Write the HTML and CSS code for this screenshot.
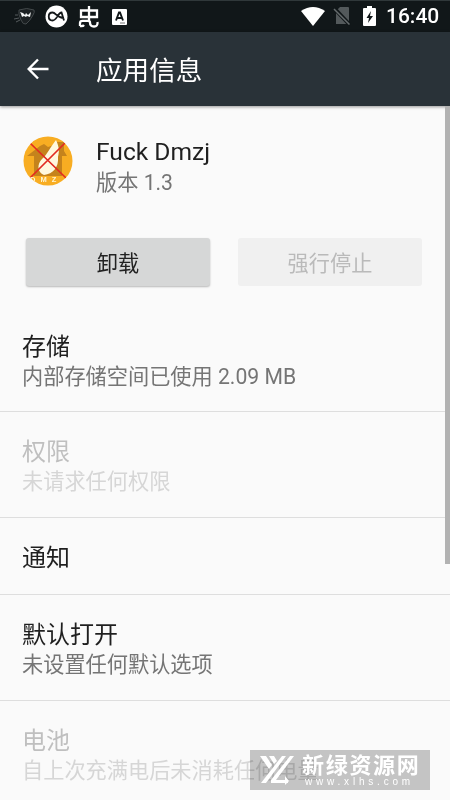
FILE: index.html
```html
<!DOCTYPE html>
<html lang="zh-CN">
<head>
<meta charset="utf-8">
<title>应用信息</title>
<link rel="stylesheet" href="styles.css">
</head>
<body>
<div class="screen">
  <header class="status">
    <div class="status-left">
      <svg width="22" height="20" viewBox="0 0 22 20"><path d="M5 3 Q13 0 20 3 Q21 5 19 8 Q16 14 12 17 Q9 18 7 13 Q4 7 5 3Z" fill="#1b2022" stroke="#43494b"/><path d="M6 5l3 1 2 2 1-2 2 2 3-3-1 5-3-1-1 1-2-1-2 1-1-3z" fill="#f1f3f3"/><path d="M1 8h3M0 12l5-1M2 15l4-2" stroke="#555b5d" stroke-width="1"/></svg>
      <svg class="oa" width="23" height="23" viewBox="0 0 23 23"><circle cx="11.500" cy="11.500" r="11" fill="#fff"/><path d="M19 15.500L16.500 7.500C13 7.500 12 15.500 7.500 15.500C2.500 15.500 2.500 7.500 7.500 7.500C11 7.500 12 13 19 13" fill="none" stroke="#15191b" stroke-width="1.800"/></svg>
      <svg class="bug" width="22" height="24" viewBox="0 0 22 24"><path d="M11 1v14.500M3 5.500h16v6.500H3zM2 21V18Q2 15.800 4.500 15.800H10Q12 15.800 12 17.500Q12 21.500 16 21.500Q20 21.500 19.500 17M2 21q3 .5 4-1" fill="none" stroke="#fff" stroke-width="2.300"/></svg>
      <svg class="a-box" width="15" height="16" viewBox="0 0 15 16"><rect width="15" height="16" rx="1" fill="#fff"/><path d="M4 11.500L7 3.500h1L11 11.500M5.200 9h4.600" fill="none" stroke="#111719" stroke-width="1.900"/><path d="M8 14h5" stroke="#777" /></svg>
    </div>
    <div class="status-right">
      <svg width="24" height="19" viewBox="0 0 24 19"><path d="M0 4Q12-4 24 4L12 19Z" fill="#fff"/></svg>
      <svg class="sim" width="18" height="20" viewBox="0 0 18 20"><path d="M7 1h8q1 0 1 1v16H3V5z" fill="#53595b"/><path d="M0 1L17 19" stroke="#111719" stroke-width="4"/><path d="M1 3L16.500 18.500" stroke="#666c6e" stroke-width="1.500"/></svg>
      <svg class="battery" width="13" height="20" viewBox="0 0 13 20"><path d="M4 0h5v2h3q1 0 1 1v16q0 1-1 1H1q-1 0-1-1V3q0-1 1-1h3z" fill="#fff"/><path d="M8 5L3.500 12H6l-1 5 5-7H7z" fill="#111719"/></svg>
      <span class="clock">16:40</span>
    </div>
  </header>
  <nav class="bar">
    <svg width="22" height="22" viewBox="0 0 22 22"><path d="M21.500 11H2M11 1.500L1.700 11l9.300 9.500" fill="none" stroke="#fff" stroke-width="2.400"/></svg>
    <h1>应用信息</h1>
  </nav>
  <main class="content">
    <section class="app">
      <svg width="50" height="50" viewBox="0 0 50 50"><defs><clipPath id="disc"><circle cx="25" cy="25" r="24.500"/></clipPath></defs><g clip-path="url(#disc)"><rect width="50" height="50" fill="#f8ad22"/><path d="M4 20L17 10l4-2 4 3 9-3V6h7v9l3 5h-5v20H11V20z" fill="#c5831c"/><path d="M33 4C37 13 36 16 35 21C36 31 30 38 21 39C14 36 14 28 19 23C24 19 28 10 33 4Z" fill="#fff8df"/><path d="M7 7L43 42M42 7L7 42" stroke="#e22b22" stroke-width="1.700"/><text x="7" y="45.500" class="logo-text">DMZ</text></g></svg>
      <div class="app-label"><h2>Fuck Dmzj</h2><p>版本 1.3</p></div>
    </section>
    <div class="actions"><button class="btn">卸载</button><button class="btn btn-off" disabled>强行停止</button></div>
    <section class="row row-first"><h3>存储</h3><p>内部存储空间已使用 2.09 MB</p></section>
    <section class="row off"><h3>权限</h3><p>未请求任何权限</p></section>
    <section class="row single"><h3>通知</h3></section>
    <section class="row"><h3>默认打开</h3><p>未设置任何默认选项</p></section>
    <section class="row off"><h3>电池</h3><p>自上次充满电后未消耗任何电量</p></section>
  </main>
  <div class="scrollbar"></div>
  <div class="watermark-bg"></div>
  <aside class="watermark">
    <svg width="36" height="31" viewBox="0 0 36 31"><path d="M0 1h6l6 9-3 4zM9 1h5l3 5-3 3z" fill="#fff"/><path d="M22 1h4L6 28H1zM30 1h4L16 25h12v3H11V25z" fill="#fff"/><path d="M25 21l4 5-4 4z" fill="#fff"/></svg>
    <div class="mark-text"><strong>新绿资源网</strong><span>www.xlhs.com</span></div>
  </aside>
</div>
</body>
</html>
```
FILE: styles.css
```css
* { box-sizing: border-box; }
body, h1, h2, h3, p { margin: 0; font-weight: 400; }
body { font-family: Roboto, "Noto Sans CJK SC", sans-serif; background: #fafafa; }
svg { display: block; flex: none; }
.screen { position: relative; width: 450px; height: 800px; overflow: hidden; background: #fafafa; color: #1f1f1f; }
.status { height: 32px; padding: 0 11px 0 14px; background: #111719; border-top: 1px solid #30383a; display: flex; justify-content: space-between; align-items: center; }
.status-left, .status-right { display: flex; align-items: center; }
.oa { margin-left: 9px; }
.bug { margin-left: 10px; }
.a-box { margin-left: 12px; }
.sim { margin-left: 8px; }
.battery { margin-left: 12px; }
.clock { margin-left: 10px; width: 53px; color: #fff; font-size: 21px; font-weight: 500; line-height: 30px; white-space: nowrap; }
.status-right { margin-top: -1px; }
.bar { height: 74px; padding-left: 27px; display: flex; align-items: center; background: #293238; box-shadow: 0 1px 3px #0006; position: relative; }
.bar h1 { margin-left: 47px; padding-top: 3px; color: #fff; font-size: 26.6px; line-height: 38px; }
.app { height: 132px; padding: 30px 0 0 23px; display: flex; align-items: flex-start; }
.app-label { margin-left: 23px; }
.app h2 { font-size: 24.6px; line-height: 32px; }
.app p { font-size: 21.2px; line-height: 29px; color: #757575; }
.logo-text { font: 700 7.5px "Liberation Sans", sans-serif; fill: #fff4cf; letter-spacing: 5px; }
.actions { height: 67px; padding: 0 28px 0 26px; display: flex; gap: 28px; }
.btn { flex: 1; height: 48px; padding: 0 0 2px; border: 0; border-radius: 3px; background: #d6d7d7; color: #222; font: 21.2px Roboto, "Noto Sans CJK SC", sans-serif; box-shadow: 0 1px 2px #0004; }
.btn-off { background: #f0f0f0; color: #bababa; box-shadow: none; }
.row { height: 106px; padding: 23px 22px 0; border-bottom: 1px solid #dedede; white-space: nowrap; }
.row-first { height: 107px; padding-top: 25px; }
.row h3 { font-size: 24px; line-height: 34px; }
.row p { margin-top: -1px; font-size: 21.2px; line-height: 28px; color: #757575; }
.row.single { height: 77px; }
.off h3 { color: #bfbfbf; }
.off p { color: #d6d6d6; }
.scrollbar { position: absolute; right: 0; top: 106px; width: 5px; height: 458px; background: #b2b2b2; }
.watermark-bg { position: absolute; left: 250px; top: 750px; width: 180px; height: 40px; background: #c8c8c8; mix-blend-mode: multiply; }
.watermark { position: absolute; left: 250px; top: 750px; width: 180px; height: 40px; padding: 5px 0 0 10px; display: flex; color: #fff; }
.mark-text { margin-left: 6px; width: 118px; }
.mark-text strong { display: block; font-size: 22px; line-height: 21px; letter-spacing: 1.7px; white-space: nowrap; font-weight: 700; }
.mark-text span { display: block; padding-left: 3px; font: 10px/11px "Liberation Sans", sans-serif; letter-spacing: 3.8px; white-space: nowrap; }
```
